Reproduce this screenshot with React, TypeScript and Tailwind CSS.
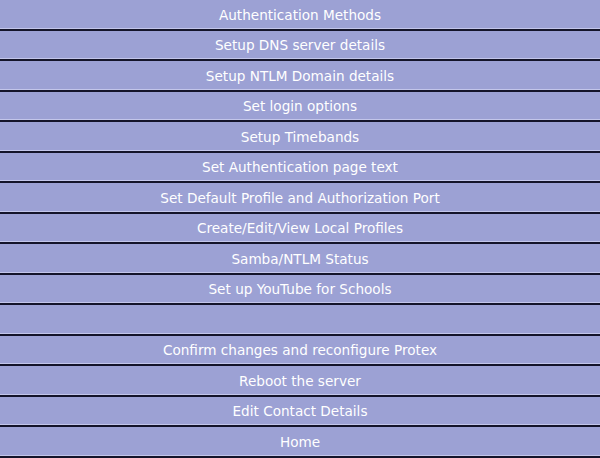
const ITEMS = [
  'Authentication Methods',
  'Setup DNS server details',
  'Setup NTLM Domain details',
  'Set login options',
  'Setup Timebands',
  'Set Authentication page text',
  'Set Default Profile and Authorization Port',
  'Create/Edit/View Local Profiles',
  'Samba/NTLM Status',
  'Set up YouTube for Schools',
  '',
  'Confirm changes and reconfigure Protex',
  'Reboot the server',
  'Edit Contact Details',
  'Home',
];

export default function App() {
  return (
    <div className="flex h-[458px] w-[600px] flex-col bg-[#9ca1d4] font-['DejaVu_Sans',Verdana,sans-serif]">
      {ITEMS.map((label, i) => (
        <a
          key={i}
          href="#"
          className="flex flex-1 items-center justify-center border-b-2 border-[#14142a] pt-px text-[13.6px] text-white shadow-[inset_0_-1px_0_#c3c6ea]"
        >
          {label}
        </a>
      ))}
    </div>
  );
}
